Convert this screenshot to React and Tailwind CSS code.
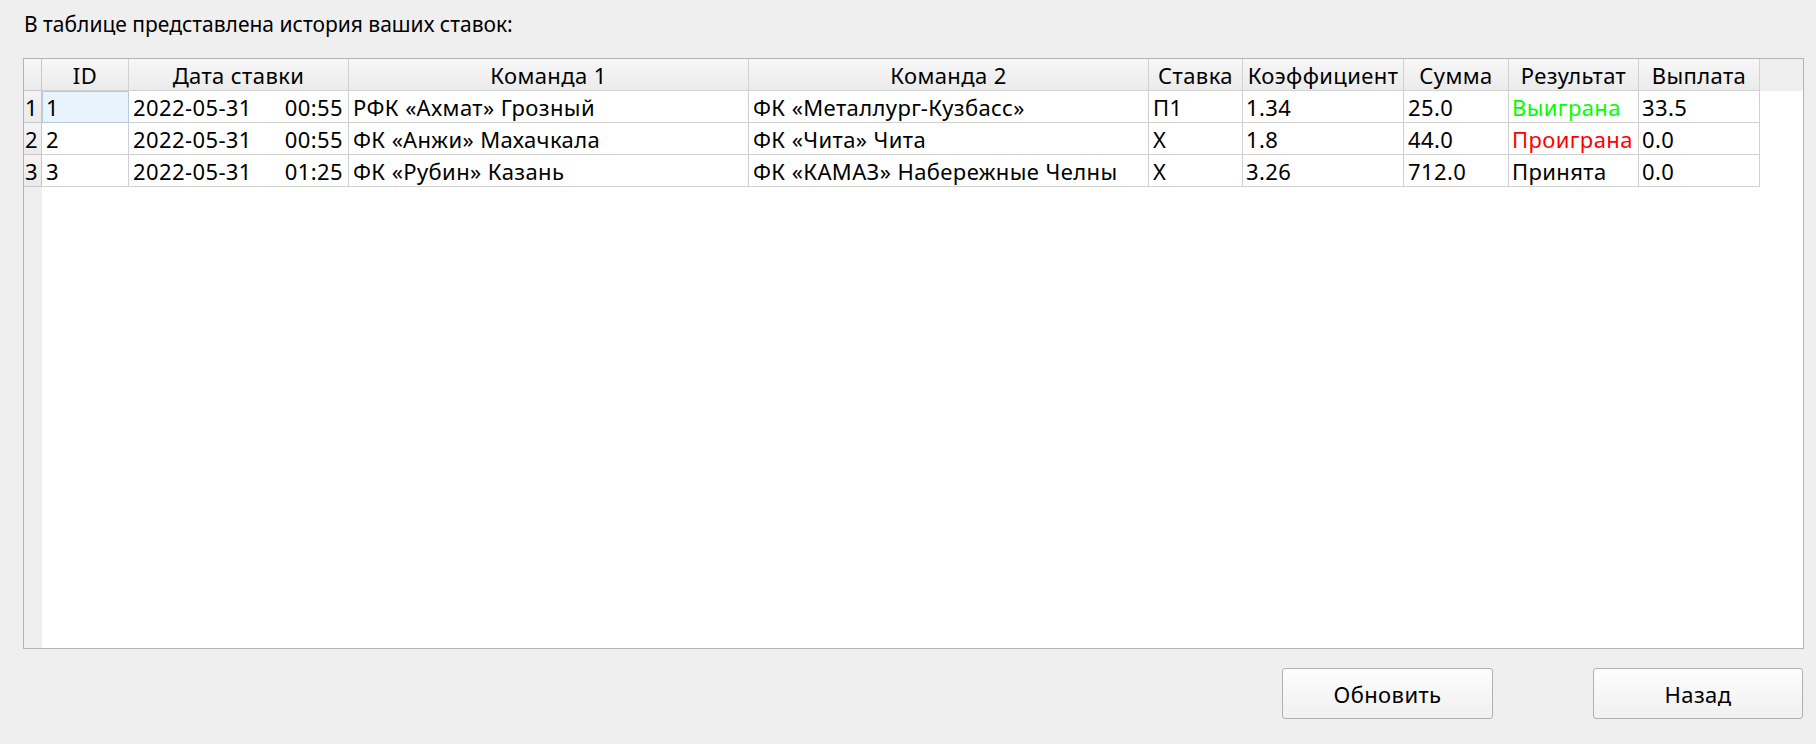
import React from "react";

const cols = [
  { key: "id", title: "ID", w: "w-[87px]" },
  { key: "date", title: "Дата ставки", w: "w-[220px]" },
  { key: "t1", title: "Команда 1", w: "w-[400px]" },
  { key: "t2", title: "Команда 2", w: "w-[400px]" },
  { key: "bet", title: "Ставка", w: "w-[94px]" },
  { key: "k", title: "Коэффициент", w: "w-[161px]" },
  { key: "sum", title: "Сумма", w: "w-[105px]" },
  { key: "res", title: "Результат", w: "w-[130px]" },
  { key: "pay", title: "Выплата", w: "w-[121px]" },
];

const rows = [
  { id: "1", d: "2022-05-31", t: "00:55", t1: "РФК «Ахмат» Грозный", t2: "ФК «Металлург-Кузбасс»", bet: "П1", k: "1.34", sum: "25.0", res: "Выиграна", rc: "text-[#00ff00]", pay: "33.5" },
  { id: "2", d: "2022-05-31", t: "00:55", t1: "ФК «Анжи» Махачкала", t2: "ФК «Чита» Чита", bet: "X", k: "1.8", sum: "44.0", res: "Проиграна", rc: "text-[#ff0000]", pay: "0.0" },
  { id: "3", d: "2022-05-31", t: "01:25", t1: "ФК «Рубин» Казань", t2: "ФК «КАМАЗ» Набережные Челны", bet: "X", k: "3.26", sum: "712.0", res: "Принята", rc: "text-black", pay: "0.0" },
];

function Cell({ w, children, className = "" }) {
  return (
    <div className={`${w} h-[32px] shrink-0 border-r border-b border-[#d0d0d0] flex items-center px-[4px] whitespace-nowrap overflow-hidden ${className}`}>
      {children}
    </div>
  );
}

export default function App() {
  return (
    <div
      className="w-[1816px] h-[744px] bg-[#efefef] text-black text-[21px] leading-none overflow-hidden"
      style={{ fontFamily: '"Noto Sans", "Open Sans", sans-serif' }}
    >
      <div className="pl-[24px] pt-[14px] h-[58px]">В таблице представлена история ваших ставок:</div>

      <div className="ml-[23px] w-[1781px] h-[591px] border border-[#b4b4b4] bg-white flex flex-col text-[22px] tracking-[0.4px]">
        {/* header */}
        <div className="flex h-[32px] shrink-0 bg-[#efefef]">
          <div className="w-[18px] h-[32px] shrink-0 border-r border-b border-[#c8c8c8] bg-linear-to-b from-[#f7f7f7] to-[#ebebeb]" />
          {cols.map((c) => (
            <div
              key={c.key}
              className={`${c.w} h-[32px] shrink-0 border-r border-b border-[#d2d2d2] bg-linear-to-b from-[#f7f7f7] to-[#ebebeb] flex items-center justify-center whitespace-nowrap overflow-hidden`}
            >
              {c.title}
            </div>
          ))}
        </div>

        <div className="flex flex-1 min-h-0">
          {/* vertical header */}
          <div className="w-[18px] shrink-0 bg-[#efefef] flex flex-col">
            {rows.map((r) => (
              <div key={r.id} className="h-[32px] border-r border-b border-[#c8c8c8] flex items-center pl-[1px] bg-linear-to-b from-[#f3f3f3] to-[#ebebeb]">
                {r.id}
              </div>
            ))}
          </div>

          <div className="flex flex-col">
            {rows.map((r, i) => (
              <div key={r.id} className="flex">
                <Cell w="w-[87px]" className={i === 0 ? "bg-[#e8f3fc] outline outline-[#b6cadb] -outline-offset-1" : ""}>{r.id}</Cell>
                <Cell w="w-[220px]" className="justify-between pr-[5px]">
                  <span>{r.d}</span>
                  <span>{r.t}</span>
                </Cell>
                <Cell w="w-[400px]">{r.t1}</Cell>
                <Cell w="w-[400px]">{r.t2}</Cell>
                <Cell w="w-[94px]">{r.bet}</Cell>
                <Cell w="w-[161px]" className="pl-[3px]">{r.k}</Cell>
                <Cell w="w-[105px]">{r.sum}</Cell>
                <Cell w="w-[130px]" className={`pl-[3px] ${r.rc}`}>{r.res}</Cell>
                <Cell w="w-[121px]" className="pl-[3px]">{r.pay}</Cell>
              </div>
            ))}
          </div>
        </div>
      </div>

      <div className="flex justify-end gap-[100px] pr-[13px] pt-[19px] text-[22px] tracking-[0.4px]">
        <button className="w-[211px] h-[51px] rounded-[3px] border border-[#b0b0b0] bg-linear-to-b from-[#fdfdfd] to-[#f0f0f0] flex items-center justify-center">
          Обновить
        </button>
        <button className="w-[210px] h-[51px] rounded-[3px] border border-[#b0b0b0] bg-linear-to-b from-[#fdfdfd] to-[#f0f0f0] flex items-center justify-center">
          Назад
        </button>
      </div>
    </div>
  );
}
